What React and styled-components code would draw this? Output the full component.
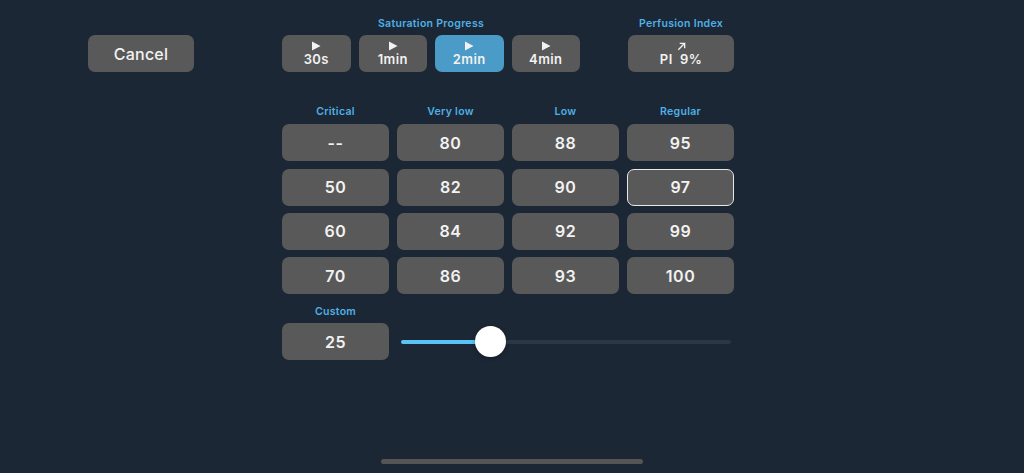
import React from "react";
import styled, { createGlobalStyle } from "styled-components";

const Global = createGlobalStyle`
  html, body { margin: 0; padding: 0; background: #1b2735; }
  body { font-family: Inter, "Noto Sans", "Liberation Sans", sans-serif; }
  * { box-sizing: border-box; }
`;

const Page = styled.div`
  width: 1024px;
  height: 473px;
  background: #1b2735;
  position: relative;
  overflow: hidden;
  padding-top: 17px;
`;

const TopRow = styled.div`
  display: flex;
  align-items: flex-end;
  padding-left: 88px;
`;

const Group = styled.div`
  display: flex;
  flex-direction: column;
  align-items: center;
  width: ${(p) => p.$w}px;
  margin-left: ${(p) => p.$ml || 0}px;
`;

const Label = styled.div`
  color: #4fb0e6;
  font-size: 10.5px;
  font-weight: 600;
  letter-spacing: 0.3px;
  height: 13px;
  line-height: 13px;
  margin-bottom: 5px;
  text-align: center;
`;

const Btn = styled.div`
  height: 37px;
  border-radius: 7px;
  background: ${(p) => (p.$active ? "#4b9bc8" : "#595959")};
  border: ${(p) => (p.$outlined ? "1.5px solid #e8e8e8" : "none")};
  color: #f2f2f2;
  display: flex;
  flex-direction: column;
  align-items: center;
  justify-content: center;
  font-size: 16px;
  font-weight: 600;
  letter-spacing: 0.5px;
  width: ${(p) => (p.$w ? p.$w + "px" : "100%")};
`;

const CancelBtn = styled(Btn)`
  font-weight: 500;
  font-size: 16px;
  letter-spacing: 0.2px;
`;

const SmallText = styled.span`
  font-size: 13px;
  font-weight: 600;
  line-height: 14px;
  letter-spacing: 0.4px;
`;

const Icon = styled.svg`
  display: block;
  margin-bottom: 1px;
`;

const ButtonStrip = styled.div`
  display: grid;
  grid-template-columns: repeat(4, 1fr);
  gap: 8px;
  width: 100%;
`;

const Grid = styled.div`
  display: grid;
  grid-template-columns: repeat(4, 107px);
  column-gap: 8px;
  row-gap: 7.3px;
  margin-left: 282px;
  margin-top: 33px;
`;

const ColLabel = styled(Label)`
  margin-bottom: -1px;
`;

const CustomRow = styled.div`
  display: flex;
  align-items: flex-end;
  margin-left: 282px;
  margin-top: 11px;
`;

const SliderWrap = styled.div`
  position: relative;
  width: 330px;
  height: 37px;
  margin-left: 12px;
  display: flex;
  align-items: center;
`;

const Track = styled.div`
  width: 100%;
  height: 4px;
  border-radius: 2px;
  background: #2c3746;
  position: relative;
`;

const Fill = styled.div`
  position: absolute;
  left: 0;
  top: 0;
  bottom: 0;
  border-radius: 2px;
  background: #5ac3f5;
`;

const Thumb = styled.div`
  position: absolute;
  top: 50%;
  width: 31px;
  height: 31px;
  margin-left: -15.5px;
  margin-top: -15.5px;
  border-radius: 50%;
  background: #ffffff;
  box-shadow: 0 1px 4px rgba(0, 0, 0, 0.3);
`;

const HomeBar = styled.div`
  position: absolute;
  left: 381px;
  bottom: 9px;
  width: 262px;
  height: 5px;
  border-radius: 3px;
  background: #555555;
`;

const Play = () => (
  <Icon width="10" height="10" viewBox="0 0 10 10">
    <path d="M1 0.5 L9.5 5 L1 9.5 Z" fill="#f2f2f2" />
  </Icon>
);

const Arrow = () => (
  <Icon width="9" height="9" viewBox="0 0 10 10">
    <path d="M1.5 8.5 L8.5 1.5 M3 1.5 H8.5 V7" stroke="#f2f2f2" strokeWidth="1.5" fill="none" />
  </Icon>
);

const columns = [
  { label: "Critical", values: ["--", "50", "60", "70"] },
  { label: "Very low", values: ["80", "82", "84", "86"] },
  { label: "Low", values: ["88", "90", "92", "93"] },
  { label: "Regular", values: ["95", "97", "99", "100"] },
];

export default function App() {
  const times = ["30s", "1min", "2min", "4min"];
  const pct = 27;
  const labels = columns.map((c) => <ColLabel key={c.label}>{c.label}</ColLabel>);
  const cells = [];
  for (let r = 0; r < 4; r++) {
    for (let c = 0; c < 4; c++) {
      const v = columns[c].values[r];
      cells.push(
        <Btn key={`${r}-${c}`} $outlined={v === "97"}>
          {v}
        </Btn>
      );
    }
  }
  return (
    <Page>
      <Global />
      <TopRow>
        <CancelBtn $w={106}>Cancel</CancelBtn>
        <Group $w={298} $ml={88}>
          <Label>Saturation Progress</Label>
          <ButtonStrip>
            {times.map((t) => (
              <Btn key={t} $active={t === "2min"}>
                <Play />
                <SmallText>{t}</SmallText>
              </Btn>
            ))}
          </ButtonStrip>
        </Group>
        <Group $w={106} $ml={48}>
          <Label>Perfusion Index</Label>
          <Btn>
            <Arrow />
            <SmallText>PI&nbsp;&nbsp;9%</SmallText>
          </Btn>
        </Group>
      </TopRow>
      <Grid>
        {labels}
        {cells}
      </Grid>
      <CustomRow>
        <Group $w={107}>
          <Label>Custom</Label>
          <Btn>25</Btn>
        </Group>
        <SliderWrap>
          <Track>
            <Fill style={{ width: `${pct}%` }} />
            <Thumb style={{ left: `${pct}%` }} />
          </Track>
        </SliderWrap>
      </CustomRow>
      <HomeBar />
    </Page>
  );
}
